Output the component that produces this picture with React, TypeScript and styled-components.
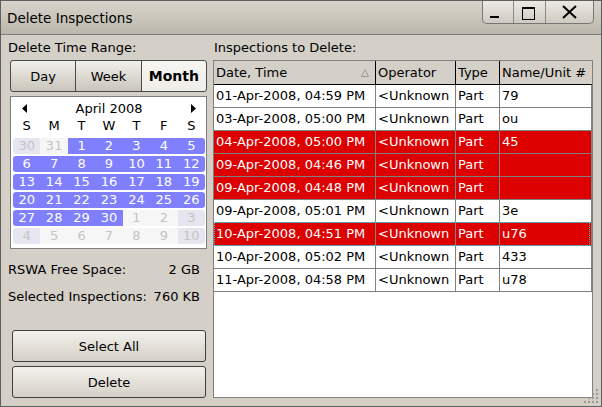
import React from 'react';
import styled, { createGlobalStyle, css } from 'styled-components';

const GlobalStyle = createGlobalStyle`
  html, body {
    margin: 0;
    padding: 0;
    background: #d4d0c8;
  }
  body {
    font-family: 'DejaVu Sans', 'Liberation Sans', sans-serif;
    font-size: 13px;
    color: #000;
  }
  * {
    box-sizing: border-box;
  }
`;

const Window = styled.div`
  position: relative;
  width: 602px;
  height: 407px;
  border: 1px solid #5f5f5f;
  background: #d4d0c8;
  display: flex;
  flex-direction: column;
  overflow: hidden;
`;

const TitleBar = styled.div`
  height: 34px;
  flex-shrink: 0;
  display: flex;
  justify-content: space-between;
  align-items: flex-start;
  padding: 0 7px 0 6px;
  background: linear-gradient(#d8d4cb, #bbb7ac);
  border-bottom: 1px solid #7c7c7c;
`;

const TitleText = styled.div`
  align-self: center;
  font-size: 13.5px;
  line-height: 16px;
  margin-top: 1px;
`;

const TitleButtons = styled.div`
  display: flex;
  height: 23px;
  border: 1px solid #767676;
  border-top: none;
  border-radius: 0 0 5px 5px;
  overflow: hidden;
  background: linear-gradient(#ebe8e2, #cfcbc2);
`;

const TitleButton = styled.div<{ $w: number; $last?: boolean }>`
  width: ${({ $w }) => $w}px;
  height: 100%;
  border-right: ${({ $last }) => ($last ? 'none' : '1px solid #8a8a8a')};
  svg {
    display: block;
  }
`;

const Body = styled.div`
  flex: 1;
  display: flex;
  gap: 6px;
  padding: 5px 8px 8px 7px;
  min-height: 0;
`;

const LeftColumn = styled.div`
  width: 199px;
  flex-shrink: 0;
  display: flex;
  flex-direction: column;
`;

const RightColumn = styled.div`
  flex: 1;
  display: flex;
  flex-direction: column;
  min-width: 0;
`;

const SectionLabel = styled.div<{ $indent?: number }>`
  height: 16px;
  line-height: 16px;
  padding-left: ${({ $indent }) => $indent ?? 0}px;
  white-space: nowrap;
`;

const Segmented = styled.div`
  display: flex;
  height: 32px;
  margin: 4px 0 0 2px;
  width: 197px;
`;

const Segment = styled.div<{ $active?: boolean; $pos: 'first' | 'mid' | 'last' }>`
  flex: 1;
  display: flex;
  align-items: center;
  justify-content: center;
  border: 1px solid #4a4a4a;
  margin-left: ${({ $pos }) => ($pos === 'first' ? 0 : -1)}px;
  border-radius: ${({ $pos }) =>
    $pos === 'first' ? '3px 0 0 3px' : $pos === 'last' ? '0 3px 3px 0' : '0'};
  background: ${({ $active }) =>
    $active ? 'linear-gradient(#f7f5f1, #efede8)' : 'linear-gradient(#f1efea, #c9c5bb)'};
  font-weight: ${({ $active }) => ($active ? 'bold' : 'normal')};
  font-size: ${({ $active }) => ($active ? 14 : 13)}px;
`;

const Calendar = styled.div`
  width: 197px;
  height: 153px;
  margin: 4px 0 0 2px;
  border: 1px solid #7f7f7f;
  background: #fff;
  display: flex;
  flex-direction: column;
`;

const CalHeader = styled.div`
  height: 21px;
  display: flex;
  align-items: center;
  justify-content: space-between;
  padding: 1px 10px 0 11px;
  svg {
    display: block;
  }
`;

const DayNames = styled.div`
  height: 16px;
  display: grid;
  grid-template-columns: repeat(7, 1fr);
  padding: 0 1px 0 2px;
  line-height: 16px;
  text-align: center;
`;

const DayGrid = styled.div`
  margin-top: 4px;
  display: grid;
  grid-template-columns: repeat(7, 1fr);
  row-gap: 2px;
  padding: 0 1px 0 2px;
`;

const DayCell = styled.div<{ $outside: boolean; $weekend: boolean; $first: boolean; $last: boolean }>`
  height: 16px;
  line-height: 16px;
  text-align: center;
  color: ${({ $outside }) => ($outside ? '#c4c4c4' : '#fff')};
  background: ${({ $outside, $weekend }) =>
    $outside ? ($weekend ? '#e6e6f0' : '#f6f6f6') : '#8080ff'};
  border-radius: ${({ $first, $last }) =>
    `${$first ? 3 : 0}px ${$last ? 3 : 0}px ${$last ? 3 : 0}px ${$first ? 3 : 0}px`};
`;

const InfoBlock = styled.div`
  margin-top: 13px;
  padding-right: 7px;
  display: flex;
  flex-direction: column;
  gap: 11px;
`;

const InfoLine = styled.div`
  height: 16px;
  line-height: 16px;
  display: flex;
  justify-content: space-between;
  white-space: nowrap;
`;

const Spacer = styled.div`
  flex: 1;
`;

const ButtonStack = styled.div`
  display: flex;
  flex-direction: column;
  gap: 4px;
  margin: 0 1px 0 4px;
`;

const PushButton = styled.div`
  height: 32px;
  display: flex;
  align-items: center;
  justify-content: center;
  border: 1px solid #3e3e3e;
  border-radius: 3px;
  background: linear-gradient(#f3f1ed, #d4d0c6);
`;

const TableBox = styled.div`
  flex: 1;
  margin-top: 4px;
  border: 1px solid #808080;
  background: #fff;
  display: flex;
  flex-direction: column;
  overflow: hidden;
`;

const HeaderRow = styled.div`
  display: flex;
  height: 25px;
  margin: -1px -1px 0;
  border: 1px solid #000;
  background: #d4d0c8;
  flex-shrink: 0;
`;

const colWidths = [162, 80, 44, 92];

const cellBase = css`
  padding-left: 2px;
  white-space: nowrap;
  overflow: hidden;
  flex-shrink: 0;
`;

const HeaderCell = styled.div<{ $w?: number; $last?: boolean }>`
  ${cellBase}
  ${({ $w }) => ($w ? `width: ${$w}px;` : 'flex: 1;')}
  line-height: 23px;
  border-right: ${({ $last }) => ($last ? 'none' : '1px solid #000')};
  display: flex;
  align-items: center;
  justify-content: space-between;
  padding-right: 6px;
`;

const DataRow = styled.div<{ $selected: boolean; $focused: boolean }>`
  position: relative;
  display: flex;
  height: 23px;
  flex-shrink: 0;
  border-bottom: 1px solid #808080;
  background: ${({ $selected }) => ($selected ? '#dc0000' : '#fff')};
  color: ${({ $selected }) => ($selected ? '#fff' : '#000')};
  ${({ $focused }) =>
    $focused &&
    css`
      &::after {
        content: '';
        position: absolute;
        left: 0;
        right: 2px;
        top: -1px;
        bottom: -1px;
        border: 1px dotted #52b8c8;
        pointer-events: none;
      }
    `}
`;

const DataCell = styled.div<{ $w: number }>`
  ${cellBase}
  width: ${({ $w }) => $w}px;
  line-height: 22px;
  border-right: 1px solid #808080;
`;

const Grip = styled.svg`
  position: absolute;
  right: 2px;
  bottom: 2px;
  display: block;
`;

type Day = { n: number; outside: boolean };

const weeks: Day[][] = [
  [30, 31, 1, 2, 3, 4, 5],
  [6, 7, 8, 9, 10, 11, 12],
  [13, 14, 15, 16, 17, 18, 19],
  [20, 21, 22, 23, 24, 25, 26],
  [27, 28, 29, 30, 1, 2, 3],
  [4, 5, 6, 7, 8, 9, 10],
].map((row, ri) =>
  row.map((n) => ({
    n,
    outside: (ri === 0 && n > 20) || (ri >= 4 && n < 15),
  }))
);

const rows = [
  { date: '01-Apr-2008, 04:59 PM', name: '79', sel: false },
  { date: '03-Apr-2008, 05:00 PM', name: 'ou', sel: false },
  { date: '04-Apr-2008, 05:00 PM', name: '45', sel: true },
  { date: '09-Apr-2008, 04:46 PM', name: '', sel: true },
  { date: '09-Apr-2008, 04:48 PM', name: '', sel: true },
  { date: '09-Apr-2008, 05:01 PM', name: '3e', sel: false },
  { date: '10-Apr-2008, 04:51 PM', name: 'u76', sel: true, focus: true },
  { date: '10-Apr-2008, 05:02 PM', name: '433', sel: false },
  { date: '11-Apr-2008, 04:58 PM', name: 'u78', sel: false },
];

const App: React.FC = () => {
  return (
    <>
      <GlobalStyle />
      <Window>
        <TitleBar>
          <TitleText>Delete Inspections</TitleText>
          <TitleButtons>
            <TitleButton $w={31}>
              <svg width="30" height="23">
                <rect x="7" y="15" width="9" height="2" fill="#000" />
              </svg>
            </TitleButton>
            <TitleButton $w={32}>
              <svg width="31" height="23">
                <rect x="8.5" y="6.5" width="12" height="12" fill="none" stroke="#000" />
                <rect x="8" y="6" width="13" height="2" fill="#000" />
              </svg>
            </TitleButton>
            <TitleButton $w={47} $last>
              <svg width="47" height="23">
                <path d="M17 5 L30 17 M30 5 L17 17" stroke="#000" strokeWidth="2" />
              </svg>
            </TitleButton>
          </TitleButtons>
        </TitleBar>

        <Body>
          <LeftColumn>
            <SectionLabel>Delete Time Range:</SectionLabel>
            <Segmented>
              <Segment $pos="first">Day</Segment>
              <Segment $pos="mid">Week</Segment>
              <Segment $pos="last" $active>
                Month
              </Segment>
            </Segmented>
            <Calendar>
              <CalHeader>
                <svg width="5" height="9">
                  <path d="M5 0 L0 4.5 L5 9 Z" fill="#000" />
                </svg>
                <span>April 2008</span>
                <svg width="5" height="9">
                  <path d="M0 0 L5 4.5 L0 9 Z" fill="#000" />
                </svg>
              </CalHeader>
              <DayNames>
                {['S', 'M', 'T', 'W', 'T', 'F', 'S'].map((d, i) => (
                  <span key={i}>{d}</span>
                ))}
              </DayNames>
              <DayGrid>
                {weeks.map((week, wi) =>
                  week.map((d, di) => (
                    <DayCell
                      key={`${wi}-${di}`}
                      $outside={d.outside}
                      $weekend={di === 0 || di === 6}
                      $first={di === 0}
                      $last={di === 6}
                    >
                      {d.n}
                    </DayCell>
                  ))
                )}
              </DayGrid>
            </Calendar>
            <InfoBlock>
              <InfoLine>
                <span>RSWA Free Space:</span>
                <span>2 GB</span>
              </InfoLine>
              <InfoLine>
                <span>Selected Inspections:</span>
                <span>760 KB</span>
              </InfoLine>
            </InfoBlock>
            <Spacer />
            <ButtonStack>
              <PushButton>Select All</PushButton>
              <PushButton>Delete</PushButton>
            </ButtonStack>
          </LeftColumn>

          <RightColumn>
            <SectionLabel $indent={1}>Inspections to Delete:</SectionLabel>
            <TableBox>
              <HeaderRow>
                <HeaderCell $w={colWidths[0]}>
                  <span>Date, Time</span>
                  <svg width="8" height="8">
                    <path d="M4 0.8 L7.5 7.5 L0.5 7.5 Z" fill="none" stroke="#9a9a9a" />
                  </svg>
                </HeaderCell>
                <HeaderCell $w={colWidths[1]}>Operator</HeaderCell>
                <HeaderCell $w={colWidths[2]}>Type</HeaderCell>
                <HeaderCell $last>Name/Unit #</HeaderCell>
              </HeaderRow>
              {rows.map((r, i) => (
                <DataRow key={i} $selected={r.sel} $focused={!!r.focus}>
                  <DataCell $w={colWidths[0]}>{r.date}</DataCell>
                  <DataCell $w={colWidths[1]}>&lt;Unknown</DataCell>
                  <DataCell $w={colWidths[2]}>Part</DataCell>
                  <DataCell $w={colWidths[3]}>{r.name}</DataCell>
                </DataRow>
              ))}
            </TableBox>
          </RightColumn>
        </Body>

        <Grip width="15" height="15">
          {[
            [12, 0],
            [12, 4],
            [8, 4],
            [12, 8],
            [8, 8],
            [4, 8],
            [12, 12],
            [8, 12],
            [4, 12],
            [0, 12],
          ].map(([x, y], i) => (
            <rect key={i} x={x} y={y} width="2" height="2" fill="#9c9890" />
          ))}
        </Grip>
      </Window>
    </>
  );
};

export default App;
